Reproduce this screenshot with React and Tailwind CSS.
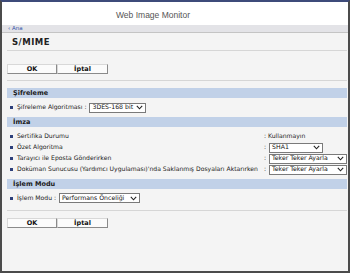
import React from 'react';

const font = { fontFamily: '"DejaVu Sans", Verdana, sans-serif' };

function Chevron() {
  return (
    <svg width="7" height="5" viewBox="0 0 7 5" className="ml-auto shrink-0">
      <path d="M0.8 0.8 L3.5 3.8 L6.2 0.8" fill="none" stroke="#222" strokeWidth="1.1" />
    </svg>
  );
}

function Select({ value, className }) {
  return (
    <div className={`flex items-center h-[10px] bg-white border border-[#7a7a7a] pl-[2px] pr-[2px] text-[6.2px] text-[#111] leading-none ${className}`}>
      <span className="whitespace-nowrap">{value}</span>
      <Chevron />
    </div>
  );
}

function Bullet() {
  return <span className="inline-block w-[3px] h-[3px] bg-[#2d3f7a] mr-[4px] shrink-0" />;
}

function SectionBar({ title }) {
  return (
    <div className="h-[10px] bg-[#c1d1e8] flex items-center pl-[6px] text-[6.5px] font-bold text-[#1a1a1a] leading-none">
      {title}
    </div>
  );
}

function Buttons() {
  return (
    <div className="flex">
      <div className="w-[50px] h-[10px] bg-[#fbfbfb] border border-[#8a8a8a] border-t-[#d8d8d8] border-l-[#d8d8d8] flex items-center justify-center text-[6.5px] font-bold text-[#111] leading-none">
        OK
      </div>
      <div className="w-[51px] h-[10px] bg-[#fbfbfb] border border-[#8a8a8a] border-t-[#d8d8d8] border-l-[#d8d8d8] flex items-center justify-center text-[6.5px] font-bold text-[#111] leading-none">
        İptal
      </div>
    </div>
  );
}

function Row({ label, children, className = '' }) {
  return (
    <div className={`flex items-center pl-[3px] text-[6.1px] text-[#222] leading-none ${className}`}>
      <Bullet />
      <span className="whitespace-nowrap">{label}</span>
      {children}
    </div>
  );
}

export default function App() {
  return (
    <div style={font} className="w-[350px] h-[273px] flex flex-col bg-[#f4f4f4] border-x-2 border-b-2 border-[#4b4b4b] border-t-2 border-t-[#3e4b7a] overflow-hidden">
      {/* cabecera */}
      <div className="h-[23px] bg-white flex items-center pt-[3px] pl-[114px] text-[8.5px] text-[#555]" style={{ fontFamily: '"Liberation Sans", Arial, sans-serif' }}>
        Web Image Monitor
      </div>
      <div className="h-[8px] bg-[#e3e3e7] border-b border-[#c4c4c4] flex items-center pl-[6px] text-[5.5px] text-[#3355aa] leading-none">
        ‹ Ana
      </div>

      <div className="pl-[5px] pr-[1px]">
        <div className="h-[18px] border-b border-[#d6d6d6] flex items-center pt-[1px] pl-[5px] text-[8.5px] font-bold tracking-[0.5px] text-[#222]">
          S/MIME
        </div>

        <div className="mt-[13px]">
          <Buttons />
        </div>
        <div className="mt-[6px] border-b border-[#d6d6d6]" />

        <div className="mt-[7px]">
          <SectionBar title="Şifreleme" />
          <Row label="Şifreleme Algoritması :" className="h-[19px]">
            <Select value="3DES-168 bit" className="ml-[3px] w-[57px]" />
          </Row>

          <SectionBar title="İmza" />
          <div className="pt-[4px]">
            <div className="h-[11px] flex items-center justify-between">
              <Row label="Sertifika Durumu" />
              <div className="w-[83px] text-[6.1px] text-[#222] leading-none">: Kullanmayın</div>
            </div>
            <div className="h-[11px] flex items-center justify-between">
              <Row label="Özet Algoritma" />
              <div className="w-[83px] flex items-center text-[6.1px] text-[#222] leading-none">
                :<Select value="SHA1" className="ml-[3px] w-[54px]" />
              </div>
            </div>
            <div className="h-[11px] flex items-center justify-between">
              <Row label="Tarayıcı ile Eposta Gönderirken" />
              <div className="w-[83px] flex items-center text-[6.1px] text-[#222] leading-none">
                :<Select value="Teker Teker Ayarla" className="ml-[3px] w-[78px]" />
              </div>
            </div>
            <div className="h-[11px] flex items-center justify-between">
              <Row label="Doküman Sunucusu (Yardımcı Uygulaması)'nda Saklanmış Dosyaları Aktarırken" />
              <div className="w-[83px] flex items-center text-[6.1px] text-[#222] leading-none">
                :<Select value="Teker Teker Ayarla" className="ml-[3px] w-[78px]" />
              </div>
            </div>
          </div>

          <div className="mt-[4px]">
            <SectionBar title="İşlem Modu" />
          </div>
          <Row label="İşlem Modu :" className="h-[18px]">
            <Select value="Performans Önceliği" className="ml-[3px] w-[81px]" />
          </Row>
        </div>

        <div className="mt-[3px] border-b border-[#d6d6d6]" />
        <div className="mt-[7px]">
          <Buttons />
        </div>
      </div>
    </div>
  );
}
